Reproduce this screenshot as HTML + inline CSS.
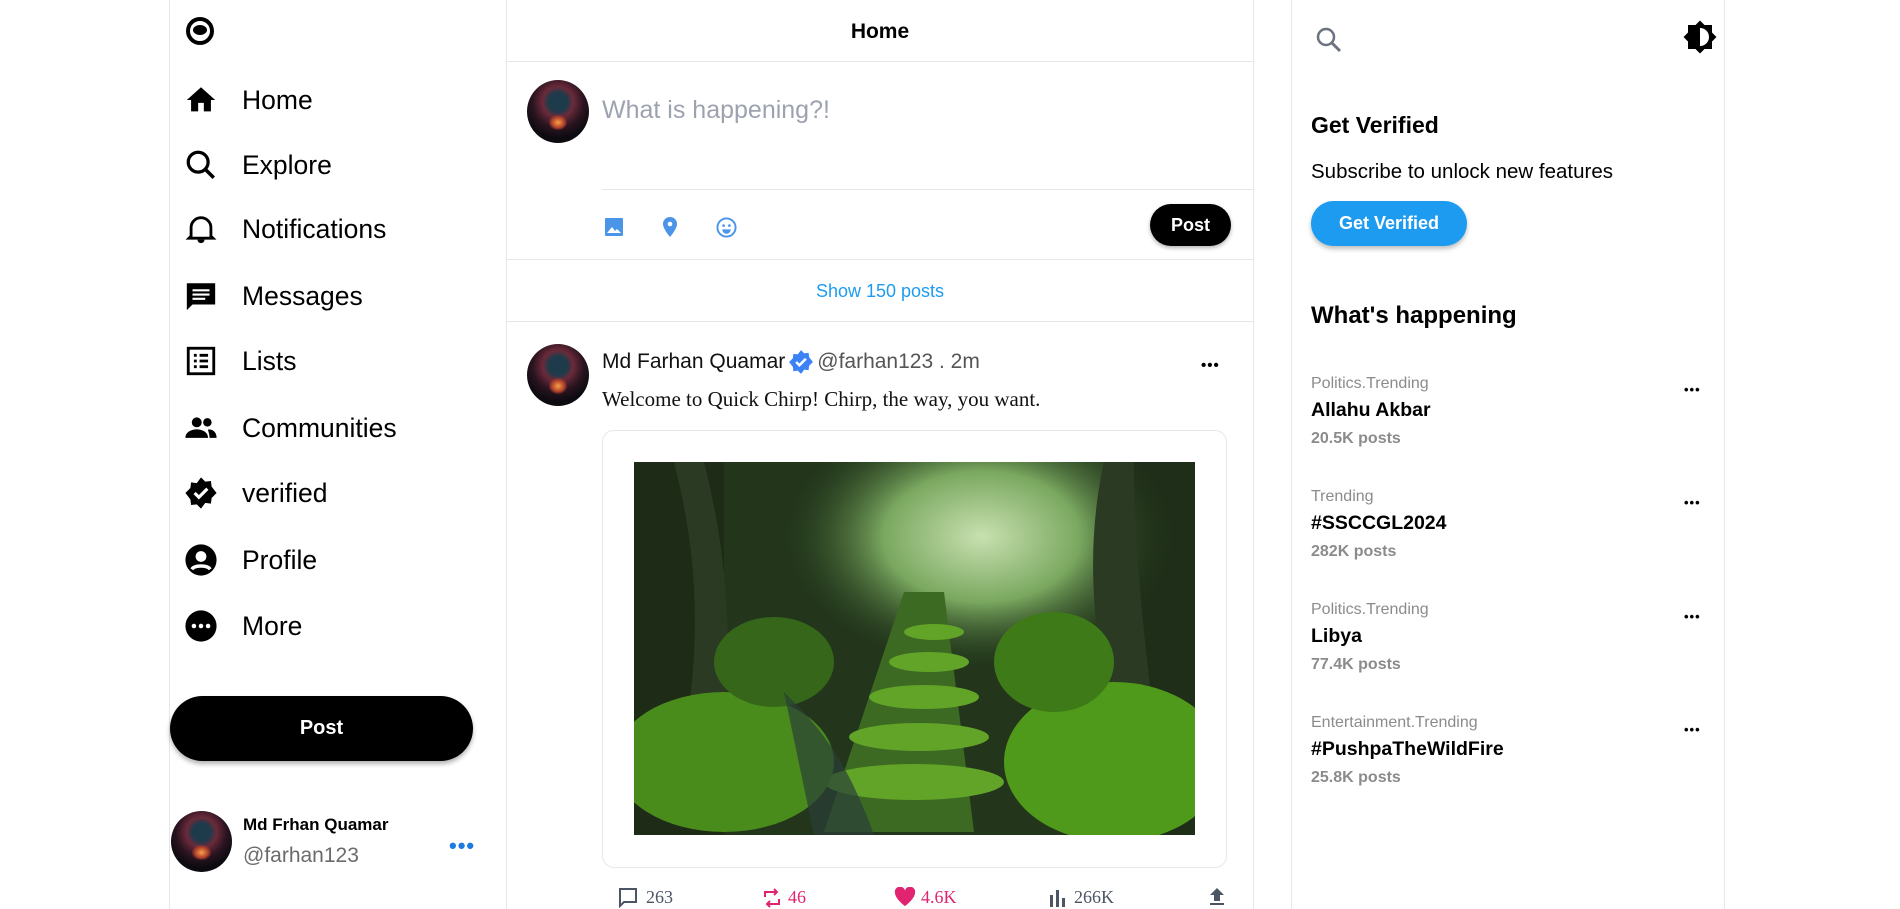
<!DOCTYPE html>
<html><head><meta charset="utf-8"><style>
*{box-sizing:border-box;margin:0;padding:0}
body{width:1900px;height:909px;overflow:hidden;background:#fff;font-family:"Liberation Sans",sans-serif;color:#000;position:relative}
.abs{position:absolute}
.col{position:absolute;top:0;height:909px;border-left:1px solid #e5e7eb;border-right:1px solid #e5e7eb}
.nav{position:absolute;left:184px;display:flex;align-items:center;font-size:26.5px}
.nav svg{width:34px;height:34px;margin-right:24px}
.av{border-radius:50%;background:radial-gradient(circle at 50% 35%,#1d3b4a 0 18%,#6b2a3a 30%,#2a1420 50%,#0d0b10 70%),#111;overflow:hidden;position:absolute}
.av:after{content:"";position:absolute;left:35%;top:55%;width:30%;height:25%;background:radial-gradient(ellipse,#f7a04a,#b0402a 50%,transparent 75%)}
.hr{position:absolute;height:1px;background:#e5e7eb}
.tr{position:absolute;left:1311px}
.tr .c{font-size:16px;color:#8b8b8b;}
.tr .t{font-size:19.5px;font-weight:bold;margin-top:6px}
.tr .n{font-size:16px;color:#8b8b8b;font-weight:bold;margin-top:8px}
.dots{position:absolute;font-weight:bold;font-size:13px;letter-spacing:1px}
</style></head><body>
<div class="col" style="left:169px;width:338px;border-left:1px solid #e5e7eb"></div>
<div class="col" style="left:506px;width:748px;border-left:1px solid #e5e7eb"></div>
<div class="col" style="left:1291px;width:434px"></div>

<svg class="abs" style="left:184px;top:16px" width="32" height="30" viewBox="0 0 32 30"><circle cx="16" cy="15" r="12" fill="none" stroke="#000" stroke-width="4"/><ellipse cx="16" cy="14" rx="7" ry="5" fill="#000"/></svg>

<div class="nav" style="top:83px"><svg viewBox="0 0 24 24"><path d="M10 20v-6h4v6h5v-8h3L12 3 2 12h3v8z"/></svg>Home</div>
<div class="nav" style="top:148px"><svg viewBox="0 0 24 24"><circle cx="10" cy="10" r="7" fill="none" stroke="#000" stroke-width="2.3"/><path d="M15 15l6 6" stroke="#000" stroke-width="2.5"/></svg>Explore</div>
<div class="nav" style="top:212px"><svg viewBox="0 0 24 24"><path d="M5 17V11a7 7 0 0114 0v6l1.5 1.5H3.5z" fill="none" stroke="#000" stroke-width="2"/><path d="M9.5 19.5a2.5 2.5 0 005 0z"/></svg>Notifications</div>
<div class="nav" style="top:279px"><svg viewBox="0 0 24 24"><path d="M2 3h20v15H6l-4 4z"/><path d="M6 8h12M6 11h12M6 14h9" stroke="#fff" stroke-width="1.5"/></svg>Messages</div>
<div class="nav" style="top:344px"><svg viewBox="0 0 24 24"><rect x="3" y="3" width="18" height="18" fill="none" stroke="#000" stroke-width="2"/><path d="M7 8h2M11 8h6M7 12h2M11 12h6M7 16h2M11 16h6" stroke="#000" stroke-width="2"/></svg>Lists</div>
<div class="nav" style="top:411px"><svg viewBox="0 0 24 24"><circle cx="9" cy="8" r="3.5"/><circle cx="16.5" cy="8" r="3"/><path d="M1 19c0-4 4-6 8-6s8 2 8 6zM17 13c3 0 6 1.5 6 6h-5c0-3-1-4.5-1-6z"/></svg>Communities</div>
<div class="nav" style="top:476px"><svg viewBox="0 0 24 24"><path d="M12 1l3 3 4-.5.5 4L23 12l-3.5 3.5-.5 4-4-.5L12 23l-3-3-4 .5-.5-4L1 12l3.5-3.5.5-4 4 .5z"/><path d="M7.5 12l3 3 6-6" stroke="#fff" stroke-width="2.2" fill="none"/></svg>verified</div>
<div class="nav" style="top:543px"><svg viewBox="0 0 24 24"><circle cx="12" cy="12" r="11"/><circle cx="12" cy="9.5" r="3.8" fill="#fff"/><path d="M5.5 18.5c2-3 11-3 13 0" stroke="#fff" stroke-width="2.5" fill="none"/></svg>Profile</div>
<div class="nav" style="top:609px"><svg viewBox="0 0 24 24"><circle cx="12" cy="12" r="11"/><circle cx="7" cy="12" r="1.6" fill="#fff"/><circle cx="12" cy="12" r="1.6" fill="#fff"/><circle cx="17" cy="12" r="1.6" fill="#fff"/></svg>More</div>

<div class="abs" style="left:170px;top:696px;width:303px;height:65px;border-radius:33px;background:#000;color:#fff;font-weight:bold;font-size:20px;display:flex;align-items:center;justify-content:center;box-shadow:0 3px 5px rgba(0,0,0,.3)">Post</div>

<div class="av" style="left:171px;top:811px;width:61px;height:61px"></div>
<div class="abs" style="left:243px;top:815px;font-weight:bold;font-size:17px">Md Frhan Quamar</div>
<div class="abs" style="left:243px;top:844px;font-size:21px;color:#6b6b6b">@farhan123</div>
<div class="abs" style="left:449px;top:833px;color:#1d7ae0;font-size:22px;font-weight:bold;letter-spacing:1px">•••</div>

<div class="abs" style="left:506px;width:748px;top:20px;text-align:center;font-weight:bold;font-size:21px">Home</div>
<div class="hr" style="left:507px;width:746px;top:61px"></div>
<div class="av" style="left:527px;top:80px;width:62px;height:63px"></div>
<div class="abs" style="left:602px;top:96px;font-size:25px;color:#9ca3af">What is happening?!</div>
<div class="hr" style="left:602px;width:651px;top:189px"></div>
<svg class="abs" style="left:604px;top:217px" width="20" height="20" viewBox="0 0 20 20"><rect x="1" y="1" width="18" height="18" rx="1" fill="#4a95e8"/><path d="M3 16l5-6 3 4 2-2 4 4z" fill="#fff"/></svg>
<svg class="abs" style="left:660px;top:216px" width="20" height="22" viewBox="0 0 20 22"><path d="M10 1a7 7 0 017 7c0 5-7 13-7 13S3 13 3 8a7 7 0 017-7z" fill="#4a95e8"/><circle cx="10" cy="8" r="2.3" fill="#fff"/></svg>
<svg class="abs" style="left:716px;top:217px" width="21" height="21" viewBox="0 0 22 22"><circle cx="11" cy="11" r="9.5" fill="none" stroke="#4a95e8" stroke-width="2"/><circle cx="8" cy="9" r="1.4" fill="#4a95e8"/><circle cx="14" cy="9" r="1.4" fill="#4a95e8"/><path d="M6.5 13h9a4.5 4.5 0 01-9 0z" fill="#4a95e8"/></svg>
<div class="abs" style="left:1150px;top:204px;width:81px;height:42px;border-radius:21px;background:#000;color:#fff;font-weight:bold;font-size:18px;display:flex;align-items:center;justify-content:center;box-shadow:0 2px 4px rgba(0,0,0,.3)">Post</div>
<div class="hr" style="left:507px;width:746px;top:259px"></div>
<div class="abs" style="left:506px;width:748px;top:281px;text-align:center;color:#1d9bf0;font-size:18px">Show 150 posts</div>
<div class="hr" style="left:507px;width:746px;top:321px"></div>

<div class="av" style="left:527px;top:344px;width:62px;height:62px"></div>
<div class="abs" style="left:602px;top:349px;font-size:21px;color:#111;display:flex;align-items:center">Md Farhan Quamar
<svg style="margin:0 3px" width="26" height="26" viewBox="0 0 24 24"><path d="M12 1l3 3 4-.5.5 4L23 12l-3.5 3.5-.5 4-4-.5L12 23l-3-3-4 .5-.5-4L1 12l3.5-3.5.5-4 4 .5z" fill="#3b82f6"/><path d="M7.5 12l3 3 6-6" stroke="#fff" stroke-width="2.3" fill="none"/></svg><span style="color:#555">@farhan123 . 2m</span></div>
<div class="dots" style="left:1201px;top:357px;font-size:15px">•••</div>
<div class="abs" style="left:602px;top:387px;font-family:'Liberation Serif',serif;font-size:21px;color:#111">Welcome to Quick Chirp! Chirp, the way, you want.</div>
<div class="abs" style="left:602px;top:430px;width:625px;height:438px;border:1px solid #e5e7eb;border-radius:12px"></div>
<svg class="abs" style="left:634px;top:462px" width="561" height="373" viewBox="0 0 561 373">
<defs><radialGradient id="g1" cx="0.62" cy="0.2" r="0.35"><stop offset="0" stop-color="#c8e0b0"/><stop offset="0.5" stop-color="#7aa860"/><stop offset="1" stop-color="#2d4a22" stop-opacity="0"/></radialGradient></defs>
<rect width="561" height="373" fill="#23361c"/>
<rect width="561" height="373" fill="url(#g1)"/>
<path d="M0 0h90v373H0z" fill="#1a2614" opacity=".6"/>
<path d="M500 0h61v373h-61z" fill="#1a2614" opacity=".5"/>
<path d="M40 0c20 80 30 160 10 280l40 0c10-120 0-200-20-280z" fill="#2b3a22"/>
<path d="M470 0c-20 90-10 180 10 260l40 0c-10-90-20-170-20-260z" fill="#2b3a22"/>
<path d="M270 130l40 0 30 240h-150z" fill="#3c6a22"/>
<g fill="#62a428"><ellipse cx="300" cy="170" rx="30" ry="8"/><ellipse cx="295" cy="200" rx="40" ry="10"/><ellipse cx="290" cy="235" rx="55" ry="12"/><ellipse cx="285" cy="275" rx="70" ry="14"/><ellipse cx="280" cy="320" rx="90" ry="18"/></g>
<ellipse cx="90" cy="300" rx="110" ry="70" fill="#4a8c1c"/>
<ellipse cx="480" cy="300" rx="110" ry="80" fill="#4f9a1a"/>
<ellipse cx="420" cy="200" rx="60" ry="50" fill="#3e7a18"/>
<ellipse cx="140" cy="200" rx="60" ry="45" fill="#35661a"/>
<path d="M150 230c30 30 60 60 90 143h-60z" fill="#2a3e38" opacity=".7"/>
</svg>

<svg class="abs" style="left:618px;top:887px" width="20" height="22" viewBox="0 0 20 22"><path d="M2 2h16v13H6l-4 4z" fill="none" stroke="#4b5563" stroke-width="2"/></svg>
<div class="abs" style="left:646px;top:887px;font-family:'Liberation Serif',serif;font-size:18px;color:#4b5563">263</div>
<svg class="abs" style="left:762px;top:887px" width="20" height="22" viewBox="0 0 20 22"><path d="M3 10V5h12M12 2l3 3-3 3M17 12v5H5M8 14l-3 3 3 3" fill="none" stroke="#e0246f" stroke-width="2"/></svg>
<div class="abs" style="left:788px;top:887px;font-family:'Liberation Serif',serif;font-size:18px;color:#e0246f">46</div>
<svg class="abs" style="left:894px;top:887px" width="22" height="20" viewBox="0 0 24 22"><path d="M12 21S1 13 1 6.5A5.5 5.5 0 0112 4a5.5 5.5 0 0111 2.5C23 13 12 21 12 21z" fill="#e0246f"/></svg>
<div class="abs" style="left:921px;top:887px;font-family:'Liberation Serif',serif;font-size:18px;color:#e0246f">4.6K</div>
<svg class="abs" style="left:1048px;top:887px" width="20" height="20" viewBox="0 0 20 20"><path d="M2 8h3v12H2zM8 3h3v17H8zM14 11h3v9h-3z" fill="#4b5563"/></svg>
<div class="abs" style="left:1074px;top:887px;font-family:'Liberation Serif',serif;font-size:18px;color:#4b5563">266K</div>
<svg class="abs" style="left:1208px;top:887px" width="18" height="20" viewBox="0 0 18 20"><path d="M9 1l7 7h-4v6H6V8H2z" fill="#4b5563"/><path d="M2 17h14" stroke="#4b5563" stroke-width="2"/></svg>

<svg class="abs" style="left:1315px;top:26px" width="28" height="28" viewBox="0 0 28 28"><circle cx="11" cy="11" r="8" fill="none" stroke="#6b7280" stroke-width="2.5"/><path d="M17 17l8 8" stroke="#6b7280" stroke-width="3"/></svg>
<svg class="abs" style="left:1682px;top:19px" width="36" height="36" viewBox="0 0 24 24"><path d="M12 1l3 3h5v5l3 3-3 3v5h-5l-3 3-3-3H4v-5l-3-3 3-3V4h5z"/><path d="M12 6a6 6 0 010 12z" fill="#fff"/></svg>
<div class="abs" style="left:1311px;top:112px;font-weight:bold;font-size:23px">Get Verified</div>
<div class="abs" style="left:1311px;top:160px;font-size:20.5px">Subscribe to unlock new features</div>
<div class="abs" style="left:1311px;top:201px;width:156px;height:45px;border-radius:23px;background:#1d9bf0;color:#fff;font-weight:bold;font-size:18px;display:flex;align-items:center;justify-content:center;box-shadow:0 3px 5px rgba(0,0,0,.25)">Get Verified</div>
<div class="abs" style="left:1311px;top:302px;font-weight:bold;font-size:24px">What's happening</div>

<div class="tr" style="top:375px"><div class="c">Politics.Trending</div><div class="t">Allahu Akbar</div><div class="n">20.5K posts</div></div>
<div class="tr" style="top:488px"><div class="c">Trending</div><div class="t">#SSCCGL2024</div><div class="n">282K posts</div></div>
<div class="tr" style="top:601px"><div class="c">Politics.Trending</div><div class="t">Libya</div><div class="n">77.4K posts</div></div>
<div class="tr" style="top:714px"><div class="c">Entertainment.Trending</div><div class="t">#PushpaTheWildFire</div><div class="n">25.8K posts</div></div>
<div class="dots" style="left:1684px;top:382px">•••</div>
<div class="dots" style="left:1684px;top:495px">•••</div>
<div class="dots" style="left:1684px;top:609px">•••</div>
<div class="dots" style="left:1684px;top:722px">•••</div>
</body></html>
